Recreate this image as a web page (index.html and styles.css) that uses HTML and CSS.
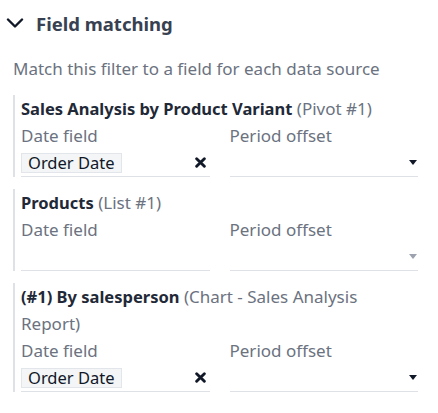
FILE: index.html
```html
<!DOCTYPE html>
<html>
  <head>
    <meta charset="utf-8">
    <title>Field matching</title>
    <link rel="stylesheet" href="styles.css">
  </head>
  <body>
    <div class="panel">
      <div class="section_head">
        <svg class="chevron" width="18" height="10" viewBox="0 0 18 10" fill="none" stroke="currentColor" stroke-width="2.4" stroke-linecap="round" stroke-linejoin="round">
          <path d="M2 1.5l7 7 7-7"></path>
        </svg>
        <span>Field matching</span>
      </div>

      <p class="hint">Match this filter to a field for each data source</p>

      <div class="source">
        <div class="source_title"><b>Sales Analysis by Product Variant</b> <span class="muted">(Pivot #1)</span></div>
        <div class="fields">
          <div class="field">
            <div class="label">Date field</div>
            <div class="input">
              <span class="tag">Order Date</span>
              <svg class="clear" width="11" height="11" viewBox="0 0 10 10" stroke="currentColor" stroke-width="2.6" stroke-linecap="round">
                <path d="M1.5 1.5l7 7M8.5 1.5l-7 7"></path>
              </svg>
            </div>
          </div>
          <div class="field">
            <div class="label">Period offset</div>
            <div class="input select">
              <span class="caret"></span>
            </div>
          </div>
        </div>
      </div>

      <div class="source">
        <div class="source_title"><b>Products</b> <span class="muted">(List #1)</span></div>
        <div class="fields">
          <div class="field">
            <div class="label">Date field</div>
            <div class="input"></div>
          </div>
          <div class="field">
            <div class="label">Period offset</div>
            <div class="input select disabled">
              <span class="caret"></span>
            </div>
          </div>
        </div>
      </div>

      <div class="source">
        <div class="source_title"><b>(#1) By salesperson</b> <span class="muted">(Chart - Sales Analysis Report)</span></div>
        <div class="fields">
          <div class="field">
            <div class="label">Date field</div>
            <div class="input">
              <span class="tag">Order Date</span>
              <svg class="clear" width="11" height="11" viewBox="0 0 10 10" stroke="currentColor" stroke-width="2.6" stroke-linecap="round">
                <path d="M1.5 1.5l7 7M8.5 1.5l-7 7"></path>
              </svg>
            </div>
          </div>
          <div class="field">
            <div class="label">Period offset</div>
            <div class="input select">
              <span class="caret"></span>
            </div>
          </div>
        </div>
      </div>
    </div>
  </body>
</html>
```

FILE: styles.css
```css
html, body {
  margin: 0;
  padding: 0;
  background: white;
  color: #374151;

  font-family: "Noto Sans", sans-serif;
  font-size: 17px;
}

.panel {
  padding: 8px 20px 0 13px;
}

.section_head {
  height: 30px;
  display: flex;
  align-items: center;
  gap: 12px;

  font-size: 18.5px;
  font-weight: bold;
}

.chevron {
  margin-left: -7px;
  color: #111827;
}

.hint {
  margin: 18px 0 13px 0;
  line-height: 26px;
  color: #6b7280;
}

.source {
  border-left: 2px solid #dee2e6;
  padding-left: 6px;
  margin-bottom: 12px;
}

.source_title {
  line-height: 27px;
}

.source_title b {
  font-size: 16.5px;
  color: #1f2937;
}

.muted {
  color: #6b7280;
}

.fields {
  display: grid;
  grid-template-columns: 1fr 1fr;
  gap: 20px;
}

.label {
  line-height: 27px;
  color: #6b7280;
}

.input {
  height: 27px;
  border-bottom: 1px solid #dee2e6;

  display: flex;
  align-items: center;
  justify-content: space-between;
}

.tag {
  font-size: 16.5px;
  line-height: 18px;
  padding: 0 6px;
  background: #f3f5f7;
  border: 1px solid #e2e6ea;
  color: #111827;
}

.clear {
  margin-right: 4px;
  color: #111827;
}

.select {
  justify-content: flex-end;
}

.caret {
  width: 0;
  height: 0;
  margin-right: 1px;
  border-left: 4px solid transparent;
  border-right: 4px solid transparent;
  border-top: 5px solid #111827;
}

.disabled .caret {
  border-top-color: #9ca3af;
}
```
